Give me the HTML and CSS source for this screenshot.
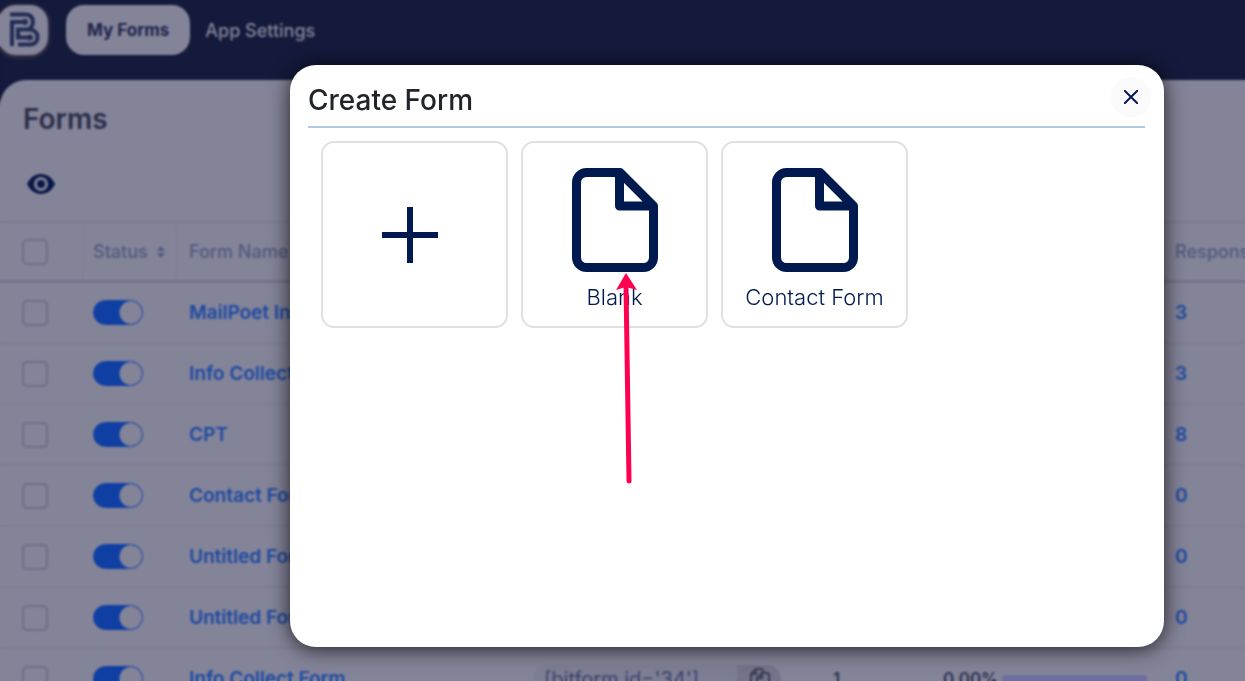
FILE: index.html
```html
<!DOCTYPE html>
<html lang="en">
<head>
<meta charset="utf-8">
<meta name="viewport" content="width=device-width, initial-scale=1">
<title>Forms</title>
<link rel="stylesheet" href="styles.css">
</head>
<body>
<svg class="defs" aria-hidden="true">
  <symbol id="doc" viewBox="0 0 86 104">
    <path d="M48 4.500H14.500a10 10 0 0 0-10 10v75a10 10 0 0 0 10 10h57a10 10 0 0 0 10-10V38z M47.500 5v33H81" fill="none" stroke="currentColor" stroke-width="9" stroke-linejoin="round"/>
  </symbol>
</svg>
<div class="app">
  <header class="topbar">
    <a class="logo" href="#" aria-label="Home">
      <svg viewBox="0 0 50 50" width="50" height="50" aria-hidden="true">
        <g fill="none" stroke="currentColor" stroke-width="4">
          <path d="M12 9.500H27.500C36 9.500 37 19.500 31 24.500"/>
          <path d="M14 41V17H27"/>
          <path d="M20 39.500H32C42 39.500 42 25 32 24.500H20V32.500H31"/>
        </g>
        <circle cx="27" cy="17" r="3" fill="currentColor"/>
        <circle cx="32" cy="32.500" r="3" fill="currentColor"/>
      </svg>
    </a>
    <nav class="nav">
      <a class="nav-link active" href="#">My Forms</a>
      <a class="nav-link" href="#">App Settings</a>
    </nav>
  </header>
  <main class="panel">
    <h1 class="panel-title">Forms</h1>
    <button class="eye" aria-label="Show columns">
      <svg viewBox="0 0 28 20" width="28" height="20" aria-hidden="true">
        <path d="M0 10C3 3.500 8 0 14 0s11 3.500 14 10c-3 6.500-8 10-14 10S3 16.500 0 10z" fill="currentColor"/>
        <circle class="eye-ring" cx="14" cy="10" r="5.500"/>
      </svg>
    </button>
    <table class="forms">
      <colgroup><col class="c-check"><col class="c-status"><col class="c-name"><col class="c-code"><col class="c-views"><col class="c-rate"><col class="c-resp"></colgroup>
      <thead>
        <tr>
          <th><input class="check" type="checkbox" aria-label="Select all"></th>
          <th class="ruled"><span class="sort">Status <svg viewBox="0 0 8 12" width="8" height="12" aria-hidden="true"><path d="M4 0l4 5H0zM4 12l4-5H0z" fill="currentColor"/></svg></span></th>
          <th class="ruled">Form Name</th><th></th><th></th><th></th><th>Responses</th>
        </tr>
      </thead>
      <tbody>
        <tr><td><input class="check" type="checkbox" aria-label="Select"></td><td><input class="switch" type="checkbox" role="switch" aria-label="Status" checked></td><td><a href="#">MailPoet Integration</a></td><td></td><td></td><td></td><td><a href="#">3</a></td></tr>
        <tr><td><input class="check" type="checkbox" aria-label="Select"></td><td><input class="switch" type="checkbox" role="switch" aria-label="Status" checked></td><td><a href="#">Info Collect Form</a></td><td></td><td></td><td></td><td><a href="#">3</a></td></tr>
        <tr><td><input class="check" type="checkbox" aria-label="Select"></td><td><input class="switch" type="checkbox" role="switch" aria-label="Status" checked></td><td><a href="#">CPT</a></td><td></td><td></td><td></td><td><a href="#">8</a></td></tr>
        <tr><td><input class="check" type="checkbox" aria-label="Select"></td><td><input class="switch" type="checkbox" role="switch" aria-label="Status" checked></td><td><a href="#">Contact Form</a></td><td></td><td></td><td></td><td><a href="#">0</a></td></tr>
        <tr><td><input class="check" type="checkbox" aria-label="Select"></td><td><input class="switch" type="checkbox" role="switch" aria-label="Status" checked></td><td><a href="#">Untitled Form</a></td><td></td><td></td><td></td><td><a href="#">0</a></td></tr>
        <tr><td><input class="check" type="checkbox" aria-label="Select"></td><td><input class="switch" type="checkbox" role="switch" aria-label="Status" checked></td><td><a href="#">Untitled Form</a></td><td></td><td></td><td></td><td><a href="#">0</a></td></tr>
        <tr>
          <td><input class="check" type="checkbox" aria-label="Select"></td>
          <td><input class="switch" type="checkbox" role="switch" aria-label="Status" checked></td>
          <td><a href="#">Info Collect Form</a></td>
          <td>
            <div class="shortcode"><span class="code">[bitform id='34']</span><button class="copy" aria-label="Copy shortcode"><svg viewBox="0 0 20 22" width="20" height="22" aria-hidden="true"><path d="M5 15H3a2 2 0 0 1-2-2V6l5-5h5a2 2 0 0 1 2 2v2M1 6h5V1M7 10l5-5h5a2 2 0 0 1 2 2v12a2 2 0 0 1-2 2H9a2 2 0 0 1-2-2zh5V5" fill="none" stroke="currentColor" stroke-width="2"/></svg></button></div>
          </td>
          <td class="num">1</td>
          <td><div class="rate"><span class="num">0.00%</span><span class="bar"></span></div></td>
          <td><a href="#">0</a></td>
        </tr>
      </tbody>
    </table>
  </main>
</div>
<div class="overlay">
  <section class="modal" role="dialog" aria-modal="true" aria-labelledby="modal-title">
    <div class="modal-head">
      <h2 class="modal-title" id="modal-title">Create Form</h2>
      <button class="close" aria-label="Close"><svg viewBox="0 0 14 14" width="14" height="14" aria-hidden="true"><path d="M0 0L14 14M14 0L0 14" stroke="currentColor" stroke-width="2"/></svg></button>
    </div>
    <hr class="divider">
    <div class="templates">
      <button class="template blank" aria-label="New form"><svg viewBox="0 0 56 56" width="56" height="56" aria-hidden="true"><path d="M28 0V56M0 28H56" stroke="currentColor" stroke-width="6"/></svg></button>
      <button class="template"><svg width="86" height="104" aria-hidden="true"><use href="#doc"/></svg><span>Blank</span></button>
      <button class="template"><svg width="86" height="104" aria-hidden="true"><use href="#doc"/></svg><span>Contact Form</span></button>
    </div>
  </section>
</div>
<svg class="arrow" viewBox="0 0 24 212" width="24" height="212" aria-hidden="true">
  <path d="M12 12L15 208" stroke="currentColor" stroke-width="5" stroke-linecap="round"/>
  <path d="M12 0L23 17L12 14L2 17z" fill="currentColor"/>
</svg>
</body>
</html>
```
FILE: styles.css
```css
* { box-sizing: border-box; }
body {
  margin: 0;
  height: 100vh;
  overflow: hidden;
  background: #131a3b;
  font-family: Inter, "Open Sans", sans-serif;
  font-size: 18px;
  color: #2b2d48;
}
button { border: 0; padding: 0; background: none; font: inherit; color: inherit; cursor: pointer; }
a { color: inherit; text-decoration: none; }
svg { display: block; }
.defs { position: absolute; width: 0; height: 0; }

.app { height: 100vh; overflow: hidden; display: flex; flex-direction: column; }
.topbar { height: 80px; flex: none; display: flex; gap: 18px; padding-top: 5px; }
.logo { width: 50px; height: 50px; margin-left: -2px; border-radius: 18px; background: #848499; color: #202b54; box-shadow: 0 1px 5px #5a4a50; }
.nav { display: flex; }
.nav-link { height: 50px; display: flex; align-items: center; padding: 0 15px; font-weight: 500; color: #848499; }
.nav-link.active { padding: 0 21px; border-radius: 18px; background: #848499; color: #20234a; font-size: 17px; font-weight: 700; }

.panel { flex: 1; overflow: hidden; background: #848499; border-radius: 26px 0 0 0; }
.panel-title { margin: 0; padding: 23px 23px 0; font-size: 28px; line-height: 32px; font-weight: 600; }
.eye { display: block; margin: 39px 0 27px 27px; color: #0a1748; }
.eye-ring { fill: none; stroke: #848499; stroke-width: 3; }

.forms { table-layout: fixed; width: 1300px; border-collapse: separate; border-spacing: 0; }
.c-check { width: 82px; }
.c-status { width: 94px; }
.c-name { width: 344px; }
.c-code { width: 300px; }
.c-views { width: 110px; }
.c-rate { width: 232px; }
.forms th, .forms td { height: 61px; padding: 0 0 0 13px; text-align: left; white-space: nowrap; border-bottom: 2px solid #7d7d92; }
.forms th { height: 62px; border-top: 2px solid #7b7c91; border-bottom: 3px solid #737489; font-weight: 500; color: #525a7f; }
.forms th:nth-child(2), .forms td:nth-child(2) { padding-left: 11px; }
.forms th:first-child, .forms td:first-child { padding-left: 22px; }
.forms .ruled { background: linear-gradient(#7d7d92, #7d7d92) left / 1px 100% no-repeat; }
.forms td { font-size: 19px; font-weight: 600; color: #2f3353; }
.forms td a { color: #1c49a1; }
.sort { display: flex; align-items: center; gap: 9px; }
.check { appearance: none; display: block; width: 26px; height: 26px; margin: 0; border: 2px solid #6d6e84; border-radius: 5px; }
.switch { appearance: none; display: block; width: 50px; height: 25px; margin: 0; border-radius: 13px; border: 1px solid #0f3fa2; background: radial-gradient(circle at 37px 50%, #848499 11px, #0f3fa2 12px); }
.shortcode { display: flex; width: 248px; height: 28px; border-radius: 14px; overflow: hidden; background: #7d7e93; }
.code { flex: 1; padding-left: 11px; line-height: 28px; font-weight: 400; font-size: 20px; color: #3b4270; }
.copy { width: 44px; padding-left: 13px; background: #73748a; color: #3a3b55; }
.rate { display: flex; align-items: center; gap: 4px; }
.forms .num { font-size: 17px; font-weight: 600; }
.bar { width: 145px; height: 7px; border-radius: 3px; background: #6c6fa0; }

.overlay { position: fixed; inset: 0; display: flex; padding: 65px 81px 34px 290px; backdrop-filter: blur(1px); }
.modal { flex: 1; padding: 12px 13px; border-radius: 26px; background: #fff; box-shadow: 0 2px 20px 1px rgba(0, 0, 0, .7); }
.modal-head { display: flex; align-items: flex-start; justify-content: space-between; height: 40px; padding-left: 5px; }
.modal-title { margin: 0; padding-top: 3px; font-size: 28px; line-height: 40px; font-weight: 500; color: #212529; }
.close { width: 40px; height: 40px; display: grid; place-items: center; border-radius: 50%; background: #fafafa; color: #061a4f; }
.divider { height: 2px; margin: 9px 6px 13px 5px; border: 0; background: #b0cbe3; }
.templates { display: flex; flex-wrap: wrap; gap: 13px; padding: 0 18px; }
.template { width: 187px; height: 187px; display: flex; flex-direction: column; align-items: center; justify-content: center; gap: 13px; padding-top: 8px; border: 2px solid #e0e0e0; border-radius: 13px; color: #001a4f; font-size: 22px; line-height: 24px; font-weight: 300; }
.template.blank { padding: 0 9px 0 0; }
.arrow { position: fixed; left: 614px; top: 273px; color: #ff0050; }
```
